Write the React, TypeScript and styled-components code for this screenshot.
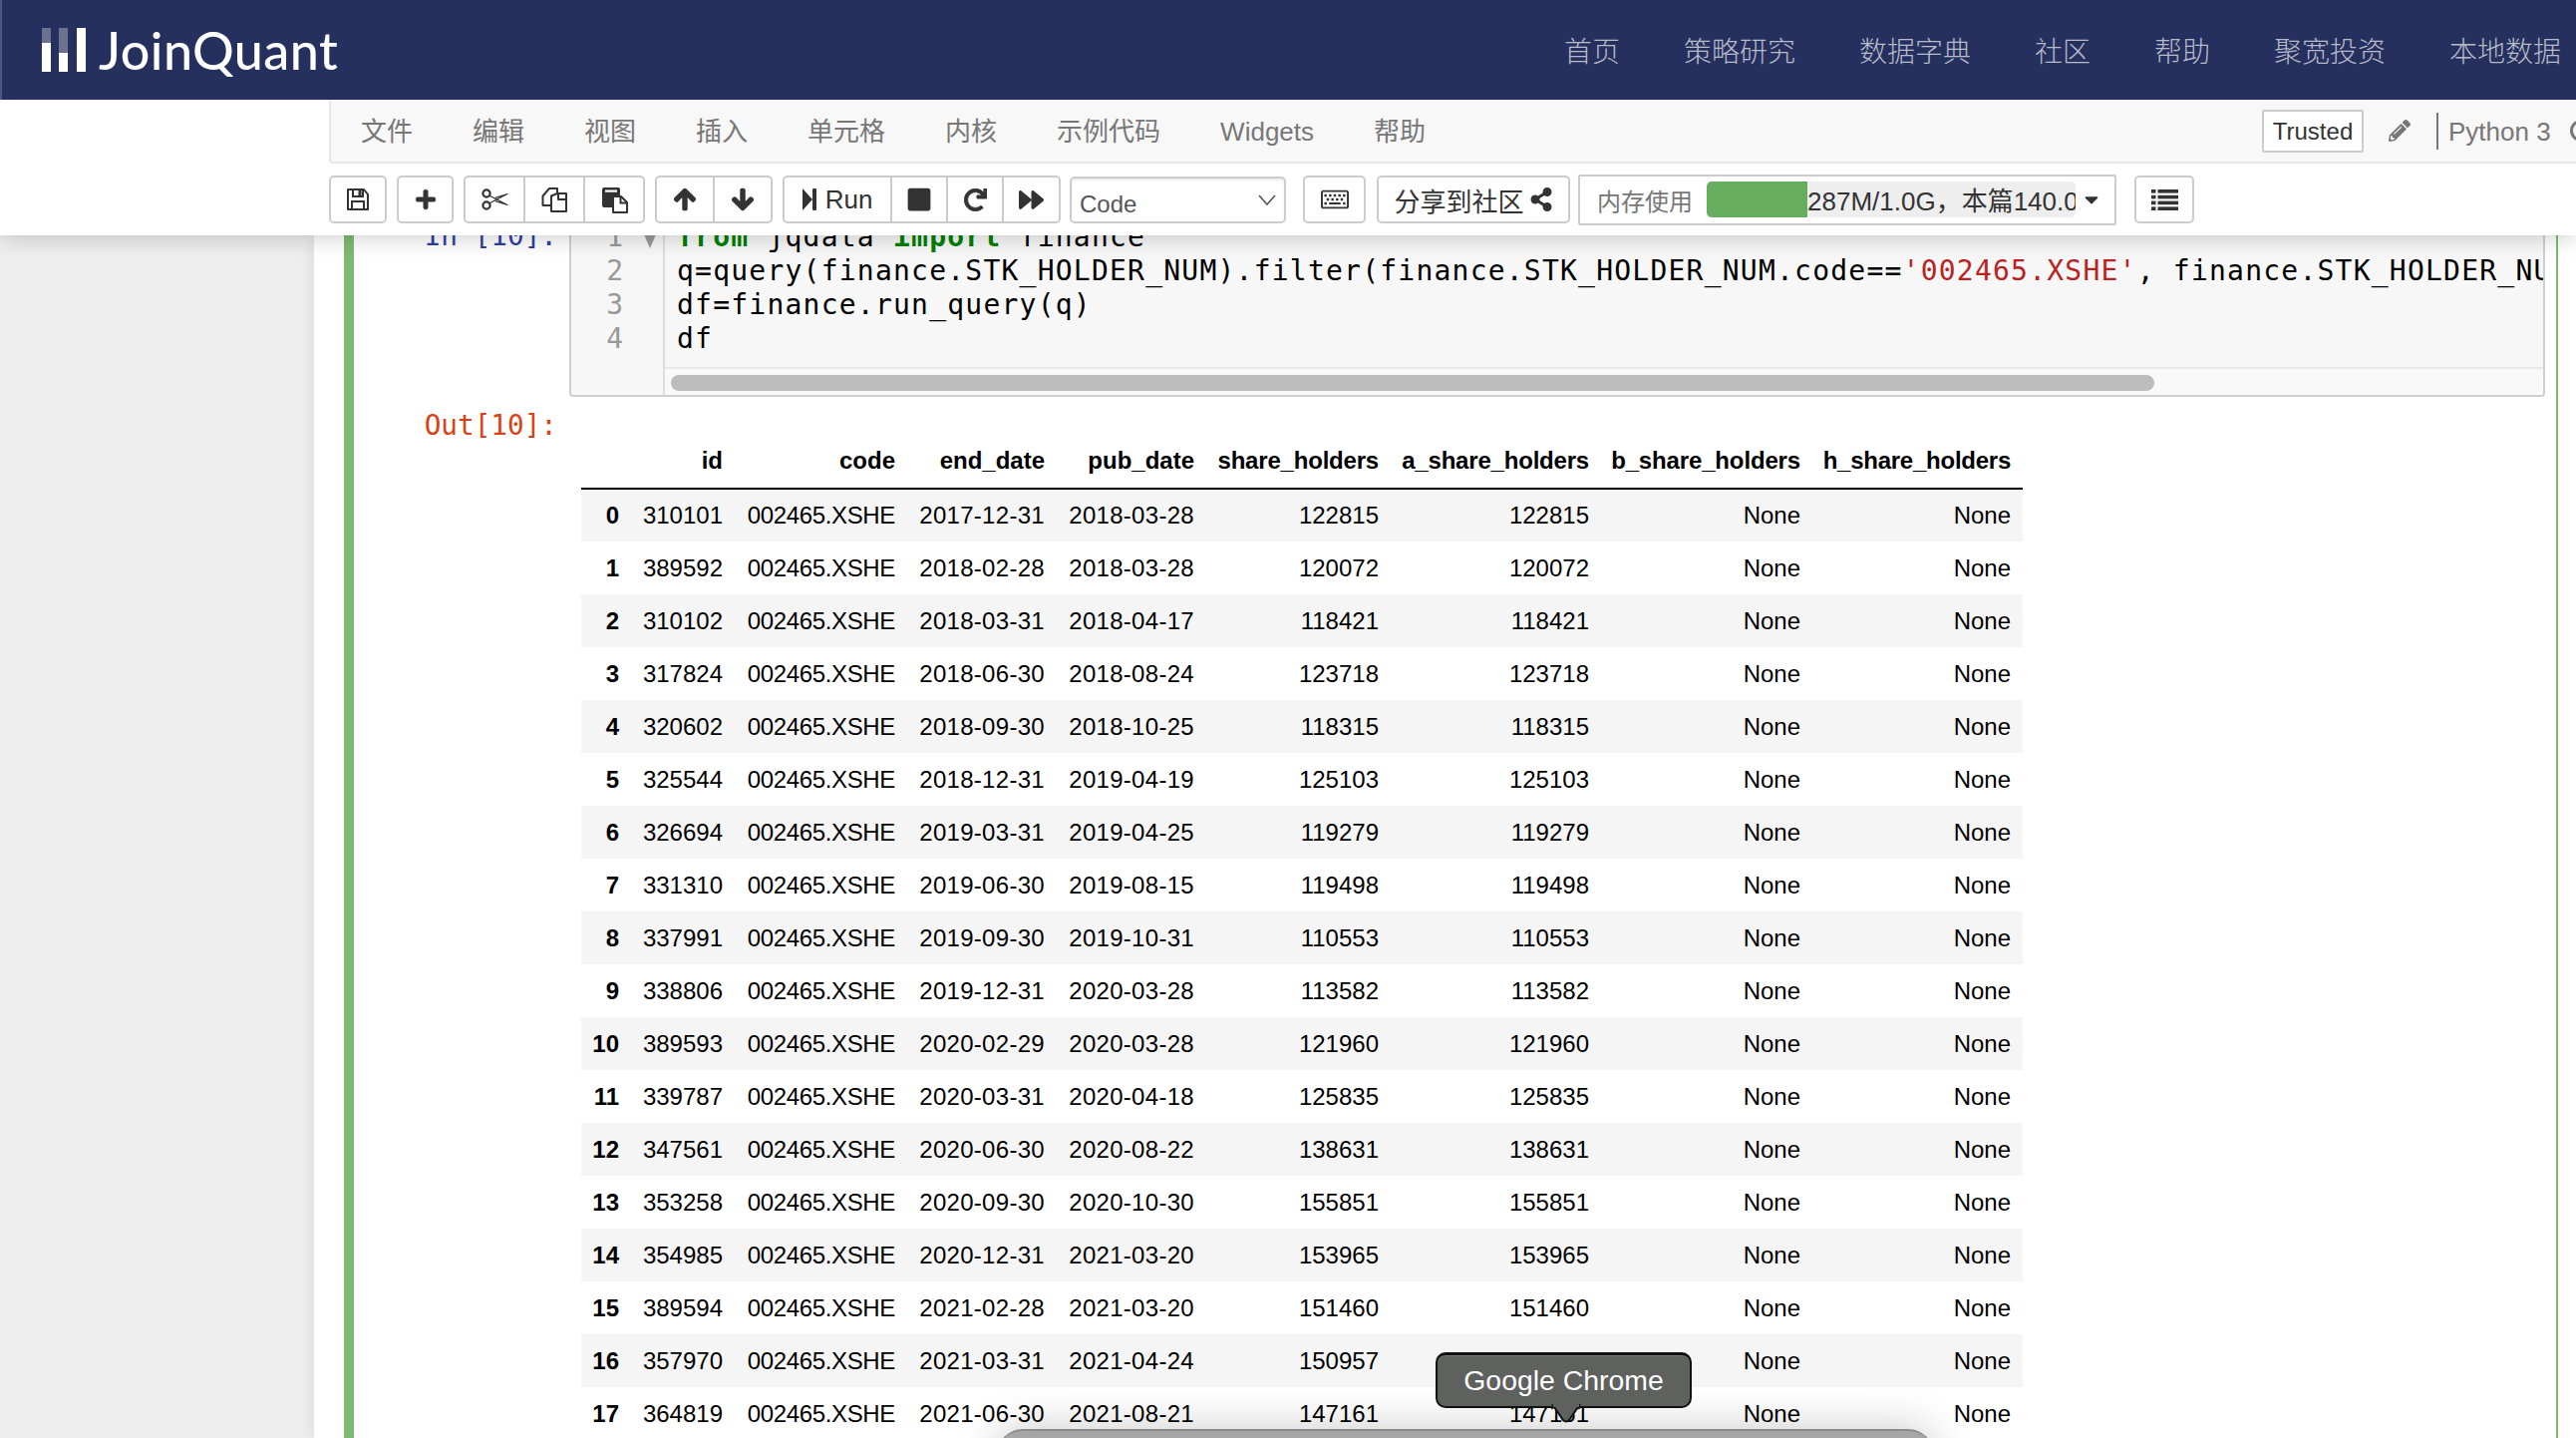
import React from "react";
import styled, { createGlobalStyle } from "styled-components";
import {
  FaArrowDown,
  FaArrowUp,
  FaCaretDown,
  FaForward,
  FaPencilAlt,
  FaPlus,
  FaRedo,
  FaRegKeyboard,
  FaShareAlt,
  FaStop,
} from "react-icons/fa";

const SANS = `"Liberation Sans", "Noto Sans CJK SC", sans-serif`;
const MONO = `"DejaVu Sans Mono", monospace`;

const Global = createGlobalStyle`
  html, body { margin: 0; padding: 0; width: 2584px; height: 1442px; overflow: hidden; background: #eee; }
  * { box-sizing: border-box; }
`;

const Page = styled.div`
  width: 2584px;
  height: 1442px;
  display: flex;
  flex-direction: column;
  overflow: hidden;
  position: relative;
  font-family: ${SANS};
`;

const Top = styled.div`
  flex: none;
  height: 236px;
  background: #fff;
  position: relative;
  z-index: 2;
  box-shadow: 0 2px 22px rgba(0, 0, 0, 0.2);
`;

const Brand = styled.header`
  height: 100px;
  background: #25305e;
  border-left: 2px solid #4d557f;
  display: flex;
  align-items: center;
  justify-content: space-between;
  padding: 0 15px 0 40px;
`;

const Logo = styled.div`
  display: flex;
  align-items: center;
  gap: 13px;
`;

const LogoWord = styled.span`
  font-family: "Lato", sans-serif;
  font-weight: 500;
  font-size: 52px;
  line-height: 60px;
  color: #fff;
  letter-spacing: 0.5px;
`;

const Nav = styled.nav`
  display: flex;
  gap: 64px;
`;

const NavLink = styled.a`
  font-family: "Noto Sans CJK SC", sans-serif;
  font-weight: 300;
  font-size: 28px;
  line-height: 40px;
  color: #b6bac9;
`;

const MenuRow = styled.div`
  height: 64px;
  margin-left: 330px;
  padding: 2px 0 0 30px;
  background: #f8f8f8;
  border-left: 2px solid #e7e7e7;
  border-bottom: 2px solid #e7e7e7;
  border-bottom-left-radius: 4px;
  display: flex;
  align-items: center;
  overflow: hidden;
`;

const MenuItem = styled.span`
  font-size: 26px;
  line-height: 36px;
  color: #777;
  margin-right: 60px;
  white-space: nowrap;
`;

const MenuRight = styled.div`
  margin-left: auto;
  margin-top: -2px;
  display: flex;
  align-items: center;
  flex: none;
  width: 315px;
`;

const Trusted = styled.span`
  flex: none;
  width: 102px;
  height: 43px;
  padding-top: 2px;
  border: 2px solid #ccc;
  border-radius: 2px;
  background: #fff;
  color: #333;
  font-size: 24px;
  display: flex;
  align-items: center;
  justify-content: center;
`;

const EditIcon = styled.span`
  flex: none;
  color: #777;
  font-size: 22px;
  margin-left: 25px;
  display: flex;
`;

const KernelName = styled.span`
  flex: none;
  margin-left: 26px;
  border-left: 2px solid #777;
  height: 37px;
  display: flex;
  align-items: center;
  padding: 2px 0 0 10px;
  font-size: 26px;
  color: #777;
  white-space: nowrap;
`;

const KernelDot = styled.span`
  flex: none;
  width: 22px;
  height: 22px;
  border: 3px solid #777;
  border-radius: 50%;
  margin-left: 19px;
`;

const ToolRow = styled.div`
  height: 72px;
  padding-left: 330px;
  display: flex;
  align-items: center;
`;

const Btn = styled.button<{ $w: number; $ml?: number }>`
  flex: none;
  width: ${(p) => p.$w}px;
  height: 48px;
  margin-left: ${(p) => p.$ml ?? 0}px;
  padding: 0;
  background: #fff;
  border: 2px solid #ccc;
  border-radius: 5px;
  color: #333;
  font-family: ${SANS};
  font-size: 26px;
  display: flex;
  align-items: center;
  justify-content: center;
  gap: 9px;
`;

const BtnGroup = styled.div<{ $ml?: number }>`
  flex: none;
  display: flex;
  margin-left: ${(p) => p.$ml ?? 0}px;
  & > button { border-radius: 0; margin-left: -2px; }
  & > button:first-child { border-radius: 5px 0 0 5px; margin-left: 0; }
  & > button:last-child { border-radius: 0 5px 5px 0; }
`;

const CellSelect = styled.div`
  flex: none;
  width: 217px;
  height: 47px;
  margin: 1px 0 0 9px;
  border: 2px solid #ccc;
  border-radius: 5px;
  background: #fff;
  box-shadow: inset 0 2px 2px rgba(0, 0, 0, 0.08);
  display: flex;
  align-items: center;
  justify-content: space-between;
  padding: 0 8px 0 8px;
  font-size: 24px;
  color: #555;
`;

const SelectValue = styled.span`
  padding-top: 8px;
`;

const ShareLabel = styled.span`
  font-size: 26px;
  color: #333;
  margin-right: -4px;
`;

const MemoryBox = styled.div`
  flex: none;
  width: 540px;
  height: 51px;
  margin-left: 8px;
  border: 2px solid #ccc;
  border-radius: 2px;
  display: flex;
  align-items: center;
  padding-left: 17px;
`;

const MemoryLabel = styled.span`
  flex: none;
  width: 110px;
  font-size: 24px;
  color: #777;
`;

const MemoryTrack = styled.div`
  flex: none;
  width: 370px;
  height: 36px;
  border-radius: 5px;
  background: #eee;
  display: flex;
  overflow: hidden;
`;

const MemoryFill = styled.div`
  flex: none;
  height: 100%;
  background: #66ae5d;
`;

const MemoryText = styled.span`
  font-size: 26px;
  line-height: 41px;
  color: #333;
  white-space: nowrap;
`;

const MemoryCaret = styled.span`
  display: flex;
  color: #333;
  font-size: 22px;
  margin-left: 5px;
`;

const Viewport = styled.div`
  flex: 1;
  min-height: 0;
  overflow: hidden;
  background: #eee;
`;

const Sheet = styled.main`
  display: flow-root;
  margin-left: 315px;
  height: 100%;
  background: #fff;
  box-shadow: 0 0 14px rgba(0, 0, 0, 0.1);
`;

const Cell = styled.section`
  margin: -19px 0 0 30px;
  width: 2221px;
  height: 1300px;
  border-left: 10px solid #7eba73;
  border-right: 2px solid #7eba73;
`;

const IoRow = styled.div`
  display: flex;
  align-items: flex-start;
`;

const Prompt = styled.div<{ $out?: boolean }>`
  flex: none;
  width: 216px;
  padding: 3px 12px 0 0;
  text-align: right;
  font-family: ${MONO};
  font-size: 27.7px;
  line-height: 34px;
  white-space: pre;
  color: ${(p) => (p.$out ? "#d84315" : "#303f9f")};
`;

const OutPrompt = styled(Prompt)`
  padding-top: 4px;
`;

const CodeBox = styled.div`
  flex: none;
  width: 1982px;
  height: 181px;
  background: #f7f7f7;
  border: 2px solid #cfcfcf;
  border-radius: 4px;
  display: flex;
  overflow: hidden;
`;

const Gutter = styled.div`
  flex: none;
  width: 94px;
  padding-top: 2px;
  border-right: 2px solid #ddd;
  font-family: ${MONO};
  font-size: 28px;
  line-height: 34px;
  color: #999;
`;

const GutterLine = styled.div`
  display: flex;
  height: 34px;
`;

const LineNo = styled.span`
  width: 52px;
  text-align: right;
`;

const Fold = styled.i`
  width: 0;
  height: 0;
  margin: 12px 0 0 20px;
  border-left: 7px solid transparent;
  border-right: 7px solid transparent;
  border-top: 16px solid #999;
`;

const CodeColumn = styled.div`
  flex: 1;
  min-width: 0;
  display: flex;
  flex-direction: column;
`;

const CodeLines = styled.pre`
  flex: 1;
  margin: 0;
  padding: 2px 0 0 12px;
  overflow: hidden;
  font-family: ${MONO};
  font-size: 28px;
  line-height: 34px;
  letter-spacing: 1.225px;
  color: #000;
`;

const Keyword = styled.b`
  color: #008000;
`;

const Str = styled.span`
  color: #ba2121;
`;

const ScrollTrack = styled.div`
  flex: none;
  height: 28px;
  background: #f9f9f9;
  border-top: 2px solid #e8e8e8;
  padding: 6px 0 0 6px;
`;

const ScrollThumb = styled.div`
  width: 1488px;
  height: 16px;
  border-radius: 8px;
  background: #bdbdbd;
`;

const OutRow = styled(IoRow)`
  margin-top: 8px;
`;

const Output = styled.div`
  flex: none;
  padding: 29px 0 0 12px;
`;

const Frame = styled.table`
  border-collapse: collapse;
  table-layout: fixed;
  width: 1446px;
  font-family: ${SANS};
  font-size: 24px;
  color: #000;
`;

const Head = styled.th<{ $track: number }>`
  height: 55px;
  padding: 0 12px 0 0;
  text-align: right;
  vertical-align: middle;
  font-weight: 700;
  white-space: nowrap;
  letter-spacing: ${(p) => p.$track}px;
  border-bottom: 2px solid #000;
`;

const Row = styled.tr<{ $odd: boolean }>`
  height: 53px;
  background: ${(p) => (p.$odd ? "#fff" : "#f5f5f5")};
`;

const Index = styled.th`
  padding: 0 12px 0 0;
  text-align: right;
  font-weight: 700;
`;

const Data = styled.td<{ $track?: number }>`
  padding: 0 12px 0 0;
  text-align: right;
  white-space: nowrap;
  letter-spacing: ${(p) => p.$track ?? 0}px;
`;

const Dock = styled.div`
  position: absolute;
  left: 1000px;
  top: 1433px;
  width: 940px;
  height: 60px;
  border-radius: 26px 26px 0 0;
  background: #a5a6a5;
  border-top: 2px solid #8a8a8a;
  box-shadow: 0 0 44px rgba(0, 0, 0, 0.22);
  z-index: 3;
`;

const DockTip = styled.div`
  position: absolute;
  left: 1440px;
  top: 1356px;
  width: 257px;
  height: 56px;
  border-radius: 10px;
  background: #5f615f;
  border: 2px solid #111;
  border-top-width: 3px;
  box-shadow: inset 0 1px 0 #777;
  z-index: 4;
  color: #fff;
  font-size: 28.4px;
  display: flex;
  align-items: center;
  justify-content: center;
`;

const TipTail = styled.svg`
  position: absolute;
  left: 114px;
  top: 49px;
  width: 30px;
  height: 20px;
`;

const Svg = styled.svg`
  display: block;
  flex: none;
`;

const SaveIcon = () => (
  <Svg width="24" height="24" viewBox="0 0 24 24" fill="none" stroke="#333" strokeWidth="2">
    <path d="M2 2h16l4 5v15H2z" strokeLinejoin="round" />
    <path d="M7 2v7h10V2M6 22v-8h12v8" />
    <rect x="12.5" y="3" width="3" height="5" fill="#333" stroke="none" />
  </Svg>
);

const CutIcon = () => (
  <Svg width="27" height="22" viewBox="0 0 27 22" fill="none" stroke="#333" strokeWidth="1.7">
    <circle cx="5" cy="5" r="3.6" strokeWidth="2.2" />
    <circle cx="5" cy="17" r="3.6" strokeWidth="2.2" />
    <path d="M8 7.2 L26 16.5 L14 12.6 M8 14.8 L26 5.5 L14 9.4" strokeLinejoin="round" strokeWidth="1.2" />
  </Svg>
);

const CopyIcon = () => (
  <Svg width="26" height="26" viewBox="0 0 26 26" fill="#fff" stroke="#333" strokeWidth="2" strokeLinejoin="round">
    <path d="M1.5 9.5 8 2h8v17H1.5z" />
    <path d="M10 9.5 16 7h9v18H10z" />
    <path d="M17 7v6h8" fill="none" />
  </Svg>
);

const PasteIcon = () => (
  <Svg width="27" height="27" viewBox="0 0 27 27">
    <path d="M1 3 a2 2 0 0 1 2-2 h14 a2 2 0 0 1 2 2 v18 H3 a2 2 0 0 1-2-2z" fill="#333" />
    <rect x="4" y="3.5" width="12" height="2.2" fill="#fff" />
    <path d="M12 10h8l6 6v10H12z" fill="#fff" stroke="#333" strokeWidth="2" strokeLinejoin="round" />
    <path d="M19.5 10v6.5H26" fill="none" stroke="#333" strokeWidth="2" />
  </Svg>
);

const StepIcon = () => (
  <Svg width="14" height="22" viewBox="0 0 14 22" fill="#333">
    <path d="M0 0 L10 11 L0 22 Z" />
    <rect x="10" y="0" width="4" height="22" rx="1" />
  </Svg>
);

const ListIcon = () => (
  <Svg width="27" height="21" viewBox="0 0 27 21" fill="#333">
    {[0, 5.8, 11.6, 17.4].map((y) => (
      <React.Fragment key={y}>
        <rect x="0" y={y} width="4.5" height="3.6" />
        <rect x="6.5" y={y} width="20.5" height="3.6" />
      </React.Fragment>
    ))}
  </Svg>
);

const Chevron = () => (
  <Svg width="18" height="11" viewBox="0 0 18 11" fill="none" stroke="#555" strokeWidth="1.6">
    <path d="M1 1 L9 10 L17 1" />
  </Svg>
);

const LogoMark = () => (
  <Svg width="44" height="44" viewBox="0 0 44 44">
    <rect x="0" y="0" width="9" height="44" fill="#6b7190" />
    <rect x="0" y="15" width="9" height="29" fill="#fff" />
    <rect x="17" y="0" width="9" height="44" fill="#6b7190" />
    <rect x="17" y="25" width="9" height="19" fill="#fff" />
    <rect x="35" y="0" width="9" height="44" fill="#fff" />
  </Svg>
);

const navLinks = ["首页", "策略研究", "数据字典", "社区", "帮助", "聚宽投资", "本地数据"];
const menuItems = ["文件", "编辑", "视图", "插入", "单元格", "内核", "示例代码", "Widgets", "帮助"];
const columns: [string, number, number][] = [
  ["", 50, 0],
  ["id", 104, 0],
  ["code", 173, 0],
  ["end_date", 150, 0],
  ["pub_date", 150, 0],
  ["share_holders", 185, -0.2],
  ["a_share_holders", 211, -0.2],
  ["b_share_holders", 212, -0.15],
  ["h_share_holders", 211, -0.25],
];
const rows: [string, string, string, string][] = [
  ["310101", "2017-12-31", "2018-03-28", "122815"],
  ["389592", "2018-02-28", "2018-03-28", "120072"],
  ["310102", "2018-03-31", "2018-04-17", "118421"],
  ["317824", "2018-06-30", "2018-08-24", "123718"],
  ["320602", "2018-09-30", "2018-10-25", "118315"],
  ["325544", "2018-12-31", "2019-04-19", "125103"],
  ["326694", "2019-03-31", "2019-04-25", "119279"],
  ["331310", "2019-06-30", "2019-08-15", "119498"],
  ["337991", "2019-09-30", "2019-10-31", "110553"],
  ["338806", "2019-12-31", "2020-03-28", "113582"],
  ["389593", "2020-02-29", "2020-03-28", "121960"],
  ["339787", "2020-03-31", "2020-04-18", "125835"],
  ["347561", "2020-06-30", "2020-08-22", "138631"],
  ["353258", "2020-09-30", "2020-10-30", "155851"],
  ["354985", "2020-12-31", "2021-03-20", "153965"],
  ["389594", "2021-02-28", "2021-03-20", "151460"],
  ["357970", "2021-03-31", "2021-04-24", "150957"],
  ["364819", "2021-06-30", "2021-08-21", "147161"],
];

export default function App() {
  return (
    <Page>
      <Global />
      <Top>
        <Brand>
          <Logo>
            <LogoMark />
            <LogoWord>JoinQuant</LogoWord>
          </Logo>
          <Nav>
            {navLinks.map((n) => (
              <NavLink key={n}>{n}</NavLink>
            ))}
          </Nav>
        </Brand>
        <MenuRow>
          {menuItems.map((m) => (
            <MenuItem key={m}>{m}</MenuItem>
          ))}
          <MenuRight>
            <Trusted>Trusted</Trusted>
            <EditIcon>
              <FaPencilAlt />
            </EditIcon>
            <KernelName>Python 3</KernelName>
            <KernelDot />
          </MenuRight>
        </MenuRow>
        <ToolRow>
          <Btn $w={58}>
            <SaveIcon />
          </Btn>
          <Btn $w={57} $ml={10}>
            <FaPlus size={22} strokeWidth={20} />
          </Btn>
          <BtnGroup $ml={10}>
            <Btn $w={62}>
              <CutIcon />
            </Btn>
            <Btn $w={62}>
              <CopyIcon />
            </Btn>
            <Btn $w={62}>
              <PasteIcon />
            </Btn>
          </BtnGroup>
          <BtnGroup $ml={10}>
            <Btn $w={60}>
              <FaArrowUp size={24} strokeWidth={36} />
            </Btn>
            <Btn $w={60}>
              <FaArrowDown size={24} strokeWidth={36} />
            </Btn>
          </BtnGroup>
          <BtnGroup $ml={10}>
            <Btn $w={110}>
              <StepIcon />
              Run
            </Btn>
            <Btn $w={58}>
              <FaStop size={26} />
            </Btn>
            <Btn $w={58}>
              <FaRedo size={23} strokeWidth={20} />
            </Btn>
            <Btn $w={59}>
              <FaForward size={25} />
            </Btn>
          </BtnGroup>
          <CellSelect>
            <SelectValue>Code</SelectValue>
            <Chevron />
          </CellSelect>
          <Btn $w={63} $ml={17}>
            <FaRegKeyboard size={28} />
          </Btn>
          <Btn $w={194} $ml={11}>
            <ShareLabel>分享到社区</ShareLabel>
            <FaShareAlt size={24} />
          </Btn>
          <MemoryBox>
            <MemoryLabel>内存使用</MemoryLabel>
            <MemoryTrack>
              <MemoryFill style={{ width: "27.3%" }} />
              <MemoryText>287M/1.0G，本篇140.0M</MemoryText>
            </MemoryTrack>
            <MemoryCaret>
              <FaCaretDown />
            </MemoryCaret>
          </MemoryBox>
          <Btn $w={60} $ml={18}>
            <ListIcon />
          </Btn>
        </ToolRow>
      </Top>
      <Viewport>
        <Sheet>
          <Cell>
            <IoRow>
              <Prompt>In [10]:</Prompt>
              <CodeBox>
                <Gutter>
                  {[1, 2, 3, 4].map((n) => (
                    <GutterLine key={n}>
                      <LineNo>{n}</LineNo>
                      {n === 1 && <Fold />}
                    </GutterLine>
                  ))}
                </Gutter>
                <CodeColumn>
                  <CodeLines>
                    <Keyword>from</Keyword> jqdata <Keyword>import</Keyword> finance{"\n"}
                    q=query(finance.STK_HOLDER_NUM).filter(finance.STK_HOLDER_NUM.code==
                    <Str>'002465.XSHE'</Str>, finance.STK_HOLDER_NUM.end_date&gt;=<Str>'2017-12-31'</Str>){"\n"}
                    df=finance.run_query(q){"\n"}
                    df
                  </CodeLines>
                  <ScrollTrack>
                    <ScrollThumb />
                  </ScrollTrack>
                </CodeColumn>
              </CodeBox>
            </IoRow>
            <OutRow>
              <OutPrompt $out>Out[10]:</OutPrompt>
              <Output>
                <Frame>
                  <colgroup>
                    {columns.map(([name, w]) => (
                      <col key={name} width={w} />
                    ))}
                  </colgroup>
                  <thead>
                    <tr>
                      {columns.map(([name, , track]) => (
                        <Head key={name} $track={track}>
                          {name}
                        </Head>
                      ))}
                    </tr>
                  </thead>
                  <tbody>
                    {rows.map(([id, end, pub, holders], i) => (
                      <Row key={id} $odd={i % 2 === 1}>
                        <Index>{i}</Index>
                        <Data>{id}</Data>
                        <Data $track={-0.35}>002465.XSHE</Data>
                        <Data $track={0.3}>{end}</Data>
                        <Data $track={0.3}>{pub}</Data>
                        <Data>{holders}</Data>
                        <Data>{holders}</Data>
                        <Data>None</Data>
                        <Data>None</Data>
                      </Row>
                    ))}
                  </tbody>
                </Frame>
              </Output>
            </OutRow>
          </Cell>
        </Sheet>
      </Viewport>
      <DockTip>
        Google Chrome
        <TipTail viewBox="0 0 30 20">
          <path d="M1 0 L12 16 Q15 19 18 16 L29 0 Z" fill="#5f615f" />
          <path d="M1 0 L12 16 Q15 19 18 16 L29 0" fill="none" stroke="#111" strokeWidth="2" />
          <rect x="2" y="0" width="26" height="3" fill="#5f615f" />
        </TipTail>
      </DockTip>
      <Dock />
    </Page>
  );
}
